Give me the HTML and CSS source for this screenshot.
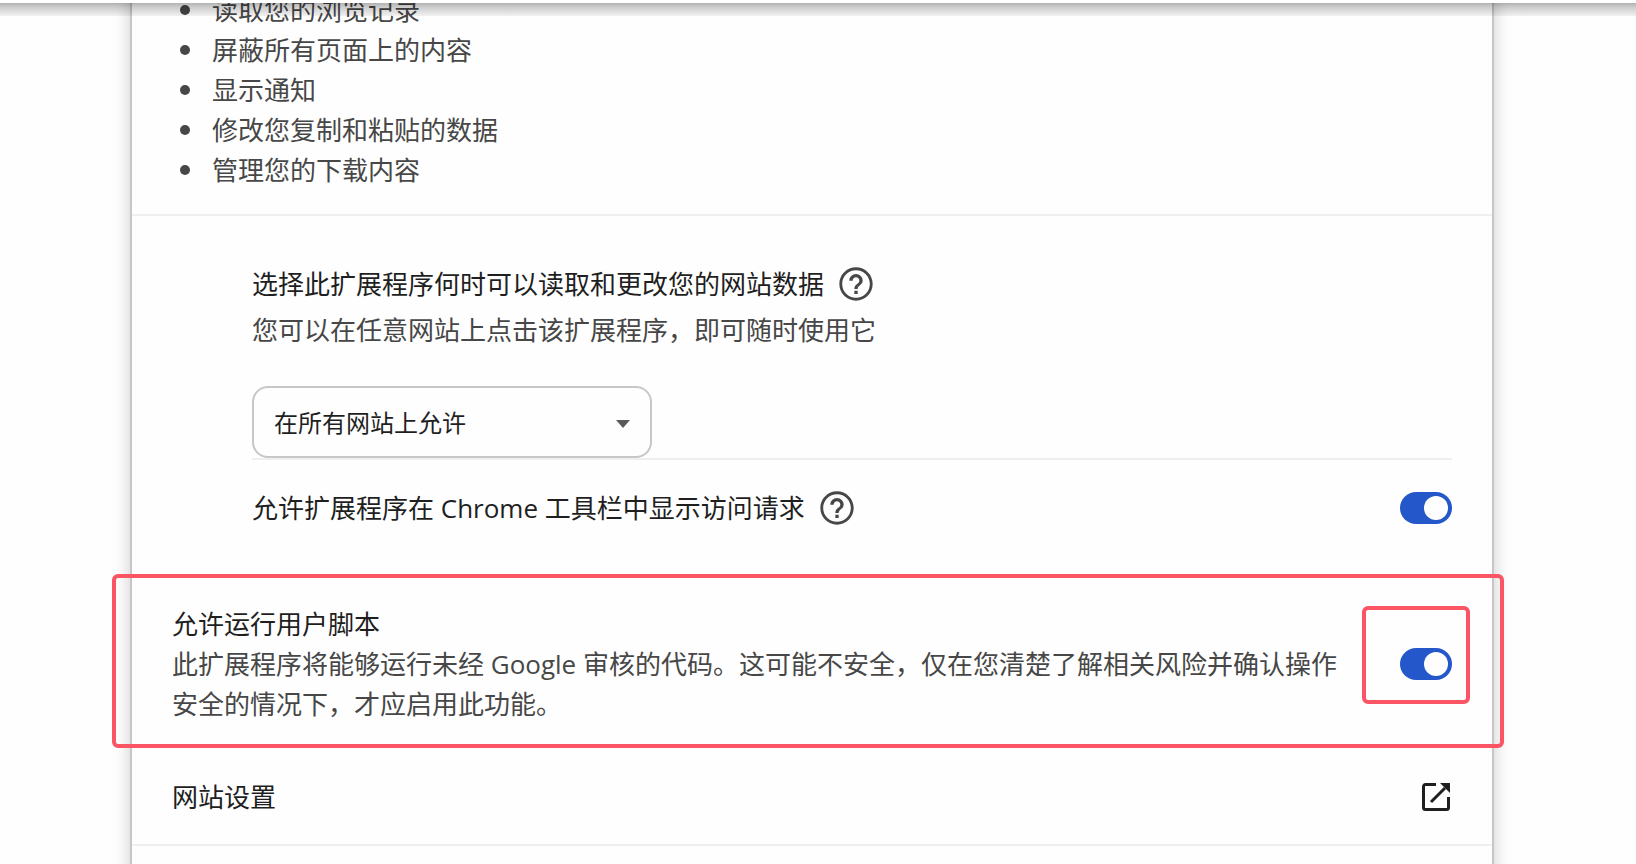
FILE: index.html
```html
<!DOCTYPE html>
<html lang="zh-CN">
<head>
<meta charset="utf-8">
<title>扩展程序</title>
<link rel="stylesheet" href="styles.css">
</head>
<body>
<div class="page">
  <header class="toolbar"></header>
  <main class="card">
    <ul class="permissions">
      <li>读取您的浏览记录</li>
      <li>屏蔽所有页面上的内容</li>
      <li>显示通知</li>
      <li>修改您复制和粘贴的数据</li>
      <li>管理您的下载内容</li>
    </ul>

    <section class="access">
      <div class="label-row">
        <label for="site-access">选择此扩展程序何时可以读取和更改您的网站数据</label>
        <button class="help" type="button" aria-label="了解详情">
          <svg viewBox="0 0 24 24"><path d="M11 18h2v-2h-2v2zm1-16C6.480 2 2 6.480 2 12s4.480 10 10 10 10-4.480 10-10S17.520 2 12 2zm0 18.300c-4.580 0-8.300-3.720-8.300-8.300S7.420 3.700 12 3.700s8.300 3.720 8.300 8.300-3.720 8.300-8.300 8.300zM12 6c-2.210 0-4 1.790-4 4h2c0-1.100.9-2 2-2s2 .9 2 2c0 2-3 1.750-3 5h2c0-2.250 3-2.500 3-5 0-2.210-1.790-4-4-4z"/></svg>
        </button>
      </div>
      <p class="hint">您可以在任意网站上点击该扩展程序，即可随时使用它</p>
      <div class="select-wrap">
        <select id="site-access" class="select">
          <option>在所有网站上允许</option>
        </select>
        <svg class="caret" viewBox="0 0 14 8"><path d="M0 0h14L7 8z"/></svg>
      </div>
      <div class="request-row">
        <div class="label-row">
          <label for="show-requests">允许扩展程序在 Chrome 工具栏中显示访问请求</label>
          <button class="help" type="button" aria-label="了解详情">
            <svg viewBox="0 0 24 24"><path d="M11 18h2v-2h-2v2zm1-16C6.480 2 2 6.480 2 12s4.480 10 10 10 10-4.480 10-10S17.520 2 12 2zm0 18.300c-4.580 0-8.300-3.720-8.300-8.300S7.420 3.700 12 3.700s8.300 3.720 8.300 8.300-3.720 8.300-8.300 8.300zM12 6c-2.210 0-4 1.790-4 4h2c0-1.100.9-2 2-2s2 .9 2 2c0 2-3 1.750-3 5h2c0-2.250 3-2.500 3-5 0-2.210-1.790-4-4-4z"/></svg>
          </button>
        </div>
        <input id="show-requests" class="toggle" type="checkbox" role="switch" checked>
      </div>
    </section>

    <section class="scripts">
      <div class="scripts-text">
        <label for="user-scripts">允许运行用户脚本</label>
        <p class="muted">此扩展程序将能够运行未经 Google 审核的代码。这可能不安全，仅在您清楚了解相关风险并确认操作安全的情况下，才应启用此功能。</p>
      </div>
      <div class="toggle-wrap">
        <input id="user-scripts" class="toggle" type="checkbox" role="switch" checked>
        <span class="mark mark-toggle"></span>
      </div>
      <span class="mark mark-row"></span>
    </section>

    <a class="link-row" href="#site-settings">
      <span>网站设置</span>
      <svg class="open" viewBox="0 0 28 28"><path class="frame" d="M14 1.500H3.500a2 2 0 0 0-2 2v21a2 2 0 0 0 2 2h21a2 2 0 0 0 2-2V14M9 19L23 5"/><path d="M18 0h10v10z"/></svg>
    </a>
    <div class="rest"></div>
  </main>
</div>
</body>
</html>
```
FILE: styles.css
```css
* {
  box-sizing: border-box;
}

body {
  margin: 0;
  background: #fefefe;
  color: #1f1f1f;
  font: 26px/40px "Open Sans", "Noto Sans CJK SC", sans-serif;
}

.page {
  height: 100vh;
  overflow: hidden;
}

.toolbar {
  position: relative;
  z-index: 2;
  height: 3px;
  background: #fff;
}

.toolbar::after {
  content: "";
  position: absolute;
  top: 100%;
  left: 0;
  right: 0;
  height: 13px;
  background: linear-gradient(rgba(0, 0, 0, 0.3), rgba(0, 0, 0, 0.2) 30%, rgba(0, 0, 0, 0.05));
}

/* The card is scrolled partly under the toolbar. */
.card {
  margin: -13px 144px 0 132px;
  background: #fefefe;
  box-shadow: 0 0 0 2px rgba(0, 0, 0, 0.12), 0 0 16px 2px rgba(0, 0, 0, 0.2);
}

.permissions {
  list-style: none;
  margin: 0;
  padding: 0 40px 24px 48px;
  border-bottom: 2px solid #efefef;
  color: #474747;
}

.permissions li {
  display: flex;
  align-items: center;
  gap: 22px;
}

.permissions li::before {
  content: "";
  width: 10px;
  height: 10px;
  border-radius: 50%;
  background: #474747;
}

.access {
  padding: 48px 40px 0 120px;
}

.label-row {
  display: flex;
  align-items: center;
  gap: 12px;
}

.help {
  width: 40px;
  height: 40px;
  padding: 0;
  border: 0;
  background: none;
}

.help svg {
  display: block;
  fill: #474747;
}

.hint {
  margin: 6px 0 36px;
  color: #474747;
}

.muted {
  margin: 0;
  color: #474747;
}

.select-wrap {
  position: relative;
  width: 400px;
}

.select {
  display: block;
  appearance: none;
  width: 100%;
  height: 72px;
  padding: 2px 48px 0 20px;
  border: 2px solid #c7c7c7;
  border-radius: 16px;
  background: #fefefe;
  color: #1f1f1f;
  font: inherit;
  font-size: 24px;
}

.caret {
  position: absolute;
  top: 34px;
  right: 22px;
  width: 14px;
  height: 8px;
  fill: #5a5a5a;
  pointer-events: none;
}

.request-row {
  display: flex;
  align-items: center;
  justify-content: space-between;
  height: 98px;
  border-top: 2px solid #efefef;
}

.toggle {
  display: block;
  appearance: none;
  flex: none;
  width: 52px;
  height: 32px;
  margin: 0;
  padding: 4px;
  border-radius: 16px;
  background: #2457c9;
}

.toggle::before {
  content: "";
  display: block;
  width: 24px;
  height: 24px;
  margin-left: auto;
  border-radius: 50%;
  background: #fefefe;
}

.scripts {
  position: relative;
  display: flex;
  align-items: center;
  gap: 56px;
  margin-top: 18px;
  padding: 30px 40px 24px;
}

.scripts-text {
  flex: 1;
}

.scripts-text label {
  display: block;
}

.toggle-wrap {
  position: relative;
}

.mark {
  position: absolute;
  border: 4px solid #fb5565;
  border-radius: 6px;
  pointer-events: none;
}

.mark-row {
  inset: 0 -12px 0 -20px;
}

.mark-toggle {
  inset: -42px -18px -24px -38px;
}

.link-row {
  display: flex;
  align-items: center;
  justify-content: space-between;
  height: 98px;
  padding: 2px 42px 0 40px;
  border-bottom: 2px solid #efefef;
  color: inherit;
  text-decoration: none;
}

.open {
  width: 28px;
  height: 28px;
  fill: #1f1f1f;
}

.open .frame {
  fill: none;
  stroke: #1f1f1f;
  stroke-width: 3;
}

.rest {
  height: 100px;
}
```
